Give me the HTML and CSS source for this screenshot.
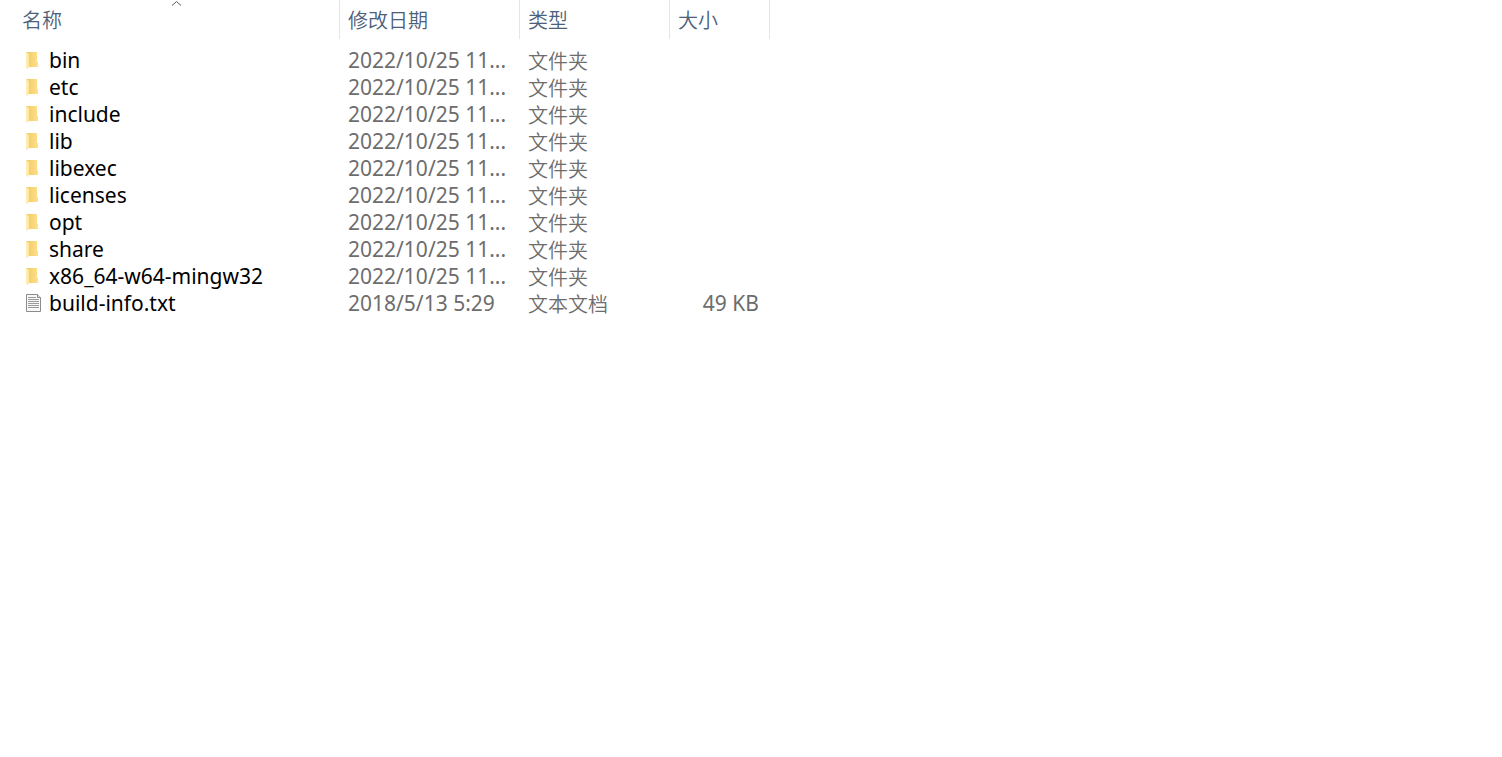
FILE: index.html
```
<!DOCTYPE html>
<html lang="zh-CN">
  <head>
    <meta charset="utf-8" />
    <link rel="stylesheet" href="styles.css">
    <title>mingw64</title>
  </head>
  <body>
    <svg class="defs" width="0" height="0">
      <defs>
        <linearGradient id="flap" x1="0" y1="0" x2="1" y2="0">
          <stop offset="0" stop-color="#fff0b8" />
          <stop offset="1" stop-color="#ffe69a" />
        </linearGradient>
        <linearGradient id="back" x1="0" y1="0" x2="1" y2="0">
          <stop offset="0" stop-color="#efc868" />
          <stop offset="1" stop-color="#ffe188" />
        </linearGradient>
      </defs>
      <symbol id="folder" viewBox="0 0 16 20">
        <path fill="url(#back)" d="M1 2h11v10h1v5H1z" />
        <path fill="url(#flap)" d="M1 2l3 2v12l-1 3-2-1z" />
      </symbol>
      <symbol id="text-file" viewBox="0 0 16 20">
        <path fill="#f8f8f8" stroke="#8c8c8c" d="M1.500 1.500h11l3 3v14h-14z" />
        <path fill="#e4e4e4" stroke="#8c8c8c" d="M12.500 1.500v3h3" />
        <path stroke="#9a9a9a" d="M3 4.500h8M3 6.500h11M3 8.500h11M3 10.500h11M3 12.500h11M3 14.500h11" />
      </symbol>
    </svg>

    <table>
      <colgroup>
        <col class="col-name">
        <col class="col-date">
        <col class="col-type">
        <col class="col-size">
      </colgroup>
      <thead>
        <tr>
          <th class="name" aria-sort="ascending">
            <svg class="sort" width="13" height="7" viewBox="0 0 13 7"><path d="M2 5.500l4.500-4 4.500 4" /></svg>
            <button>名称</button>
          </th>
          <th><button>修改日期</button></th>
          <th><button>类型</button></th>
          <th><button>大小</button></th>
        </tr>
      </thead>
      <tbody>
        <tr>
          <td class="name"><svg class="icon"><use href="#folder" /></svg>bin</td>
          <td>2022/10/25 11...</td>
          <td>文件夹</td>
          <td class="size"></td>
        </tr>
        <tr>
          <td class="name"><svg class="icon"><use href="#folder" /></svg>etc</td>
          <td>2022/10/25 11...</td>
          <td>文件夹</td>
          <td class="size"></td>
        </tr>
        <tr>
          <td class="name"><svg class="icon"><use href="#folder" /></svg>include</td>
          <td>2022/10/25 11...</td>
          <td>文件夹</td>
          <td class="size"></td>
        </tr>
        <tr>
          <td class="name"><svg class="icon"><use href="#folder" /></svg>lib</td>
          <td>2022/10/25 11...</td>
          <td>文件夹</td>
          <td class="size"></td>
        </tr>
        <tr>
          <td class="name"><svg class="icon"><use href="#folder" /></svg>libexec</td>
          <td>2022/10/25 11...</td>
          <td>文件夹</td>
          <td class="size"></td>
        </tr>
        <tr>
          <td class="name"><svg class="icon"><use href="#folder" /></svg>licenses</td>
          <td>2022/10/25 11...</td>
          <td>文件夹</td>
          <td class="size"></td>
        </tr>
        <tr>
          <td class="name"><svg class="icon"><use href="#folder" /></svg>opt</td>
          <td>2022/10/25 11...</td>
          <td>文件夹</td>
          <td class="size"></td>
        </tr>
        <tr>
          <td class="name"><svg class="icon"><use href="#folder" /></svg>share</td>
          <td>2022/10/25 11...</td>
          <td>文件夹</td>
          <td class="size"></td>
        </tr>
        <tr>
          <td class="name"><svg class="icon"><use href="#folder" /></svg>x86_64-w64-mingw32</td>
          <td>2022/10/25 11...</td>
          <td>文件夹</td>
          <td class="size"></td>
        </tr>
        <tr>
          <td class="name"><svg class="icon"><use href="#text-file" /></svg>build-info.txt</td>
          <td>2018/5/13 5:29</td>
          <td>文本文档</td>
          <td class="size">49 KB</td>
        </tr>
      </tbody>
    </table>
  </body>
</html>
```
FILE: styles.css
```
body {
  margin: 0;
  background: white;
  color: #6d6d6d;
  font-family: "Noto Sans", "Noto Sans CJK SC", sans-serif;
  font-size: 21px;
  line-height: 27px;
}
.defs {
  position: absolute;
}
table {
  table-layout: fixed;
  width: 0;
  border-collapse: separate;
  border-spacing: 0;
}
.col-name {
  width: 340px;
}
.col-date {
  width: 180px;
}
.col-type {
  width: 150px;
}
.col-size {
  width: 100px;
}
th, td {
  padding: 0 8px;
  text-align: left;
  white-space: nowrap;
}
th {
  position: relative;
  height: 39px;
  border-right: 1px solid #e5e5e5;
}
th.name {
  padding-left: 22px;
}
td.name {
  padding-left: 25px;
  color: black;
}
td:nth-child(3) {
  font-family: "Noto Sans CJK SC", sans-serif;
  font-size: 20px;
  font-weight: 350;
}
td.size {
  padding-right: 11px;
  text-align: right;
}
/* gap between the header and the first row */
tbody::before {
  content: "";
  display: table-row;
  height: 8px;
}
button {
  display: block;
  padding: 0;
  border: 0;
  background: none;
  color: #4c607a;
  font-family: "Noto Sans CJK SC", sans-serif;
  font-size: 20px;
  font-weight: 350;
  line-height: 27px;
}
.sort {
  position: absolute;
  top: 0;
  left: 50%;
  fill: none;
  stroke: #5a5a5a;
}
.icon {
  width: 16px;
  height: 20px;
  margin-right: 8px;
  vertical-align: -2px;
}
```
